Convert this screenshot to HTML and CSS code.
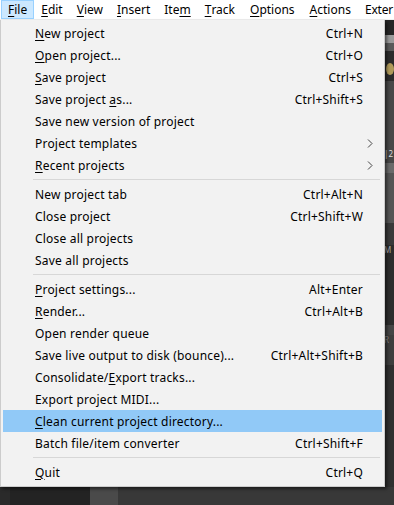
FILE: index.html
```html
<!DOCTYPE html>
<html>
<head>
<meta charset="utf-8">
<link rel="stylesheet" href="styles.css">
</head>
<body>
<div class="app">
  <div class="menubar">
    <span class="mb-item active"><u>F</u>ile</span>
    <span class="mb-item"><u>E</u>dit</span>
    <span class="mb-item"><u>V</u>iew</span>
    <span class="mb-item"><u>I</u>nsert</span>
    <span class="mb-item">Ite<u>m</u></span>
    <span class="mb-item"><u>T</u>rack</span>
    <span class="mb-item"><u>O</u>ptions</span>
    <span class="mb-item"><u>A</u>ctions</span>
    <span class="mb-item last">Exter</span>
  </div>
  <div class="workspace">
    <div class="ws-main"></div>
    <div class="ws-right">
      <div class="r r1"></div>
      <div class="r r2"></div>
      <div class="r r3"></div>
      <div class="r r4"><span class="knob"></span></div>
      <div class="r r5"></div>
      <div class="r r6">|2</div>
      <div class="r r7"></div>
      <div class="r r8"></div>
      <div class="r r9"></div>
      <div class="r r10">M</div>
      <div class="r r11"></div>
      <div class="r r12">R</div>
      <div class="r r13"></div>
    </div>
  </div>
  <div class="bottombar">
    <div class="bb b1"></div>
    <div class="bb b2"></div>
    <div class="bb b3"></div>
    <div class="bb b4"></div>
  </div>

  <div class="menu">
    <div class="row"><span class="lbl"><u>N</u>ew project</span><span class="sc">Ctrl+N</span></div>
    <div class="row"><span class="lbl"><u>O</u>pen project...</span><span class="sc">Ctrl+O</span></div>
    <div class="row"><span class="lbl"><u>S</u>ave project</span><span class="sc">Ctrl+S</span></div>
    <div class="row"><span class="lbl">Save project <u>a</u>s...</span><span class="sc">Ctrl+Shift+S</span></div>
    <div class="row"><span class="lbl">Save new version of project</span><span class="sc"></span></div>
    <div class="row"><span class="lbl">Project templates</span><span class="arrow"><svg width="6" height="9" viewBox="0 0 6 9"><path d="M1 0.5 L5 4.5 L1 8.5" fill="none" stroke="#444" stroke-width="1"/></svg></span></div>
    <div class="row"><span class="lbl"><u>R</u>ecent projects</span><span class="arrow"><svg width="6" height="9" viewBox="0 0 6 9"><path d="M1 0.5 L5 4.5 L1 8.5" fill="none" stroke="#444" stroke-width="1"/></svg></span></div>
    <div class="sep"></div>
    <div class="row"><span class="lbl">New project tab</span><span class="sc">Ctrl+Alt+N</span></div>
    <div class="row"><span class="lbl">Close project</span><span class="sc">Ctrl+Shift+W</span></div>
    <div class="row"><span class="lbl">Close all projects</span><span class="sc"></span></div>
    <div class="row"><span class="lbl">Save all projects</span><span class="sc"></span></div>
    <div class="sep"></div>
    <div class="row"><span class="lbl"><u>P</u>roject settings...</span><span class="sc">Alt+Enter</span></div>
    <div class="row"><span class="lbl"><u>R</u>ender...</span><span class="sc">Ctrl+Alt+B</span></div>
    <div class="row"><span class="lbl">Open render queue</span><span class="sc"></span></div>
    <div class="row"><span class="lbl">Save live output to disk (bounce)...</span><span class="sc">Ctrl+Alt+Shift+B</span></div>
    <div class="row"><span class="lbl">Consolidate/<u>E</u>xport tracks...</span><span class="sc"></span></div>
    <div class="row"><span class="lbl">Export project MIDI...</span><span class="sc"></span></div>
    <div class="row hl"><span class="lbl"><u>C</u>lean current project directory...</span><span class="sc"></span></div>
    <div class="row"><span class="lbl">Batch file/item converter</span><span class="sc">Ctrl+Shift+F</span></div>
    <div class="sep"></div>
    <div class="row"><span class="lbl"><u>Q</u>uit</span><span class="sc">Ctrl+Q</span></div>
  </div>
</div>
</body>
</html>
```

FILE: styles.css
```css
* { box-sizing: border-box; }
html, body { margin: 0; padding: 0; }
body {
  width: 394px;
  height: 505px;
  overflow: hidden;
  background: #2e2e2e;
  font-family: "Noto Sans", "Open Sans", sans-serif;
  font-size: 12px;
  color: #000;
}
.app {
  position: relative;
  width: 394px;
  height: 505px;
  display: flex;
  flex-direction: column;
}
u { text-decoration: underline; text-underline-offset: 2px; text-decoration-thickness: 1px; }

.menubar {
  height: 20px;
  background: #fff;
  border-bottom: 1px solid #f0f0f0;
  display: flex;
  align-items: stretch;
  white-space: nowrap;
  overflow: hidden;
  padding-left: 1px;
}
.mb-item {
  display: flex;
  align-items: center;
  padding: 0 6px;
  line-height: 18px;
  border: 1px solid transparent;
}
.mb-item:nth-child(7) { padding-left: 7px; }
.mb-item:nth-child(8) { padding-left: 7px; }
.mb-item.last { padding: 0 0 0 6px; letter-spacing: -0.2px; }
.mb-item.active {
  background: #cce8ff;
  border-color: #99d1ff;
}

.workspace {
  flex: 1;
  display: flex;
}
.ws-main { flex: 1; background: #303030; }
.ws-right {
  width: 10px;
  display: flex;
  flex-direction: column;
  color: #ccc;
  font-size: 8px;
  line-height: 10px;
  overflow: hidden;
}
.r { width: 10px; overflow: hidden; white-space: nowrap; }
.r1 { height: 15px; background: #262626; }
.r2 { height: 8px; background: #9a9a9a; }
.r3 { height: 8px; background: #5a5a5a; }
.r4 { height: 30px; background: #2c2c2c; position: relative; }
.knob { position: absolute; left: 2px; top: 12px; width: 8px; height: 12px; border-radius: 50%; background: #b09a5a; }
.r5 { height: 68px; background: #484848; }
.r6 { height: 14px; background: #484848; color: #ddd; }
.r7 { height: 10px; background: #6a6a6a; }
.r8 { height: 50px; background: #555; }
.r9 { height: 22px; background: #3a3a3a; }
.r10 { height: 80px; background: #2d2d2d; color: #aaa; }
.r11 { height: 10px; background: #454545; }
.r12 { height: 30px; background: #3e3e3e; color: #888; }
.r13 { flex: 1; background: #303030; }

.bottombar {
  height: 18px;
  display: flex;
}
.bb { height: 100%; }
.b1 { width: 10px; background: #2a2a2a; }
.b2 { width: 80px; background: #232323; }
.b3 { width: 28px; background: #4a4a4a; }
.b4 { flex: 1; background: #383838; }

.menu {
  position: absolute;
  left: 0;
  top: 20px;
  width: 385px;
  height: 467px;
  background: #f2f2f2;
  border: 1px solid #cccccc;
  border-top: none;
  padding: 2px 2px 3px 2px;
  box-shadow: 2px 2px 3px rgba(0,0,0,0.5);
  display: flex;
  flex-direction: column;
}
.row {
  height: 22px;
  display: flex;
  align-items: center;
  padding-left: 32px;
  padding-right: 19px;
  white-space: nowrap;
  letter-spacing: 0.2px;
}
.row .lbl { flex: 1; }
.row .sc { text-align: right; }
.row .arrow { display: flex; margin-right: -10px; }
.row.hl { background: #91c9f7; }
.sep {
  height: 7px;
  display: flex;
  align-items: center;
  padding-left: 30px;
  padding-right: 2px;
}
.sep::before {
  content: "";
  flex: 1;
  height: 1px;
  background: #d7d7d7;
}
```
